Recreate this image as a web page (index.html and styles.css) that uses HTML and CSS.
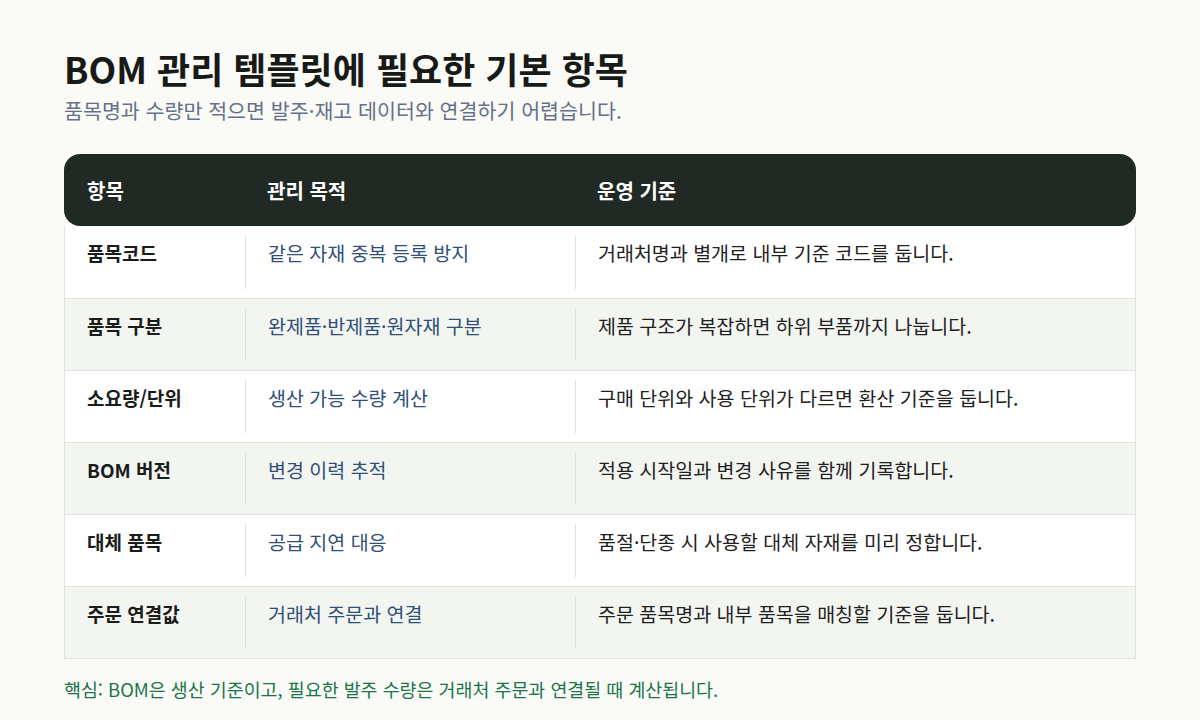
FILE: index.html
```html
<!DOCTYPE html>
<html lang="ko">
<head>
<meta charset="utf-8">
<link rel="stylesheet" href="styles.css">
</head>
<body>
<main class="page">
  <h1 class="title">BOM 관리 템플릿에 필요한 기본 항목</h1>
  <p class="subtitle">품목명과 수량만 적으면 발주·재고 데이터와 연결하기 어렵습니다.</p>
  <div class="table">
    <div class="head">
      <div class="hcell c1">항목</div>
      <div class="hcell c2">관리 목적</div>
      <div class="hcell c3">운영 기준</div>
    </div>
    <div class="body">
      <div class="row">
        <div class="cell c1 name">품목코드</div>
        <div class="cell c2 purpose">같은 자재 중복 등록 방지</div>
        <div class="cell c3 rule">거래처명과 별개로 내부 기준 코드를 둡니다.</div>
      </div>
      <div class="row alt">
        <div class="cell c1 name">품목 구분</div>
        <div class="cell c2 purpose">완제품·반제품·원자재 구분</div>
        <div class="cell c3 rule">제품 구조가 복잡하면 하위 부품까지 나눕니다.</div>
      </div>
      <div class="row">
        <div class="cell c1 name">소요량/단위</div>
        <div class="cell c2 purpose">생산 가능 수량 계산</div>
        <div class="cell c3 rule">구매 단위와 사용 단위가 다르면 환산 기준을 둡니다.</div>
      </div>
      <div class="row alt">
        <div class="cell c1 name">BOM 버전</div>
        <div class="cell c2 purpose">변경 이력 추적</div>
        <div class="cell c3 rule">적용 시작일과 변경 사유를 함께 기록합니다.</div>
      </div>
      <div class="row">
        <div class="cell c1 name">대체 품목</div>
        <div class="cell c2 purpose">공급 지연 대응</div>
        <div class="cell c3 rule">품절·단종 시 사용할 대체 자재를 미리 정합니다.</div>
      </div>
      <div class="row alt">
        <div class="cell c1 name">주문 연결값</div>
        <div class="cell c2 purpose">거래처 주문과 연결</div>
        <div class="cell c3 rule">주문 품목명과 내부 품목을 매칭할 기준을 둡니다.</div>
      </div>
    </div>
  </div>
  <p class="note">핵심: BOM은 생산 기준이고, 필요한 발주 수량은 거래처 주문과 연결될 때 계산됩니다.</p>
</main>
</body>
</html>
```
FILE: styles.css
```css
* { box-sizing: border-box; }
html, body { margin: 0; padding: 0; }
body {
  background: #fafaf7;
  font-family: "Noto Sans CJK KR", "Noto Sans", sans-serif;
  color: #1d1f1d;
  width: 1200px;
  height: 720px;
  overflow: hidden;
}
.page {
  padding: 43px 64px 0 64px;
}
.title {
  margin: 0;
  font-size: 36px;
  line-height: 50px;
  font-weight: 700;
  color: #181a18;
}
.subtitle {
  margin: 0;
  font-size: 20.6px;
  line-height: 34px;
  color: #66708a;
}
.table {
  margin-top: 27px;
}
.head {
  display: flex;
  height: 72px;
  background: #202924;
  border-radius: 16px;
  color: #ffffff;
  font-size: 20px;
  font-weight: 700;
  align-items: center;
}
.c1 { width: 180px; flex: none; }
.c2 { width: 330px; flex: none; }
.c3 { flex: 1; }
.hcell { padding-left: 23px; }
.body {
  border: 1px solid #dfe3dd;
  border-top: none;
}
.row {
  display: flex;
  height: 72px;
  padding: 10px 0 9px 0;
  background: #ffffff;
  border-top: 1px solid #e1e5df;
}
.row:first-child { border-top: none; }
.row.alt { background: #f3f5f1; }
.cell {
  padding: 2px 22px;
  line-height: 30px;
  font-size: 19.5px;
}
.cell.c2, .cell.c3 { border-left: 1px solid #dde1db; }
.name { font-weight: 700; color: #1a1c1a; font-size: 19px; }
.purpose { color: #2f4e78; }
.rule { color: #1f211f; }
.note {
  margin: 17px 0 0 0;
  font-size: 18.4px;
  line-height: 26px;
  font-weight: 400;
  color: #1b7548;
}
```
